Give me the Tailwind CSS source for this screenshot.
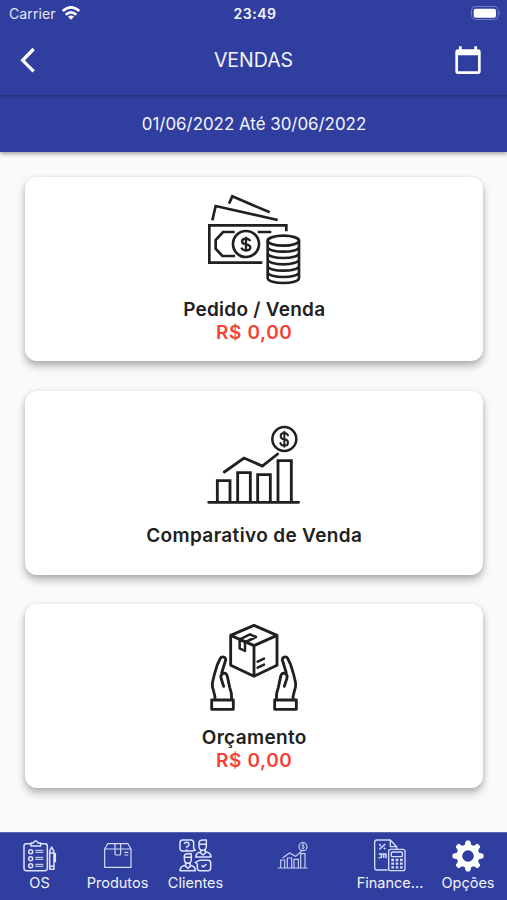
<!DOCTYPE html>
<html lang="pt-BR">
<head>
<meta charset="utf-8">
<title>Vendas</title>
<script src="https://cdn.jsdelivr.net/npm/@tailwindcss/browser@4"></script>
</head>
<body class="bg-[#fafafa]">
<div class="w-[507px] h-[900px] flex flex-col overflow-hidden font-['Inter','Liberation_Sans',sans-serif] text-[#212121]">

  <header class="relative z-10 bg-[#303f9f] text-white shadow-[0_2px_4px_rgba(0,0,0,0.35)]">
    <div class="h-[95px] shadow-[0_1px_3px_rgba(0,0,0,0.35)]">
      <div class="h-7 grid grid-cols-3 items-center pl-[9px] pr-[6px] text-[#e6e8f6]">
        <div class="flex items-center gap-[6px]">
          <span class="text-[14px] leading-5 tracking-[0.1px]">Carrier</span>
          <svg class="w-[18px] h-[14px] mt-[-2px]" viewBox="0 0 54 42" fill="none" stroke="#fff" stroke-width="8">
            <path d="M2 15Q27-7 52 15"/><path d="M11 26Q27 12 43 26"/><path d="M27 41l-9-9q9-7 18 0z" fill="#fff" stroke="none"/>
          </svg>
        </div>
        <div class="text-center text-[14px] font-semibold tracking-[0.5px] leading-5 text-[#f4f5fc]">23:49</div>
        <svg class="w-[30px] h-[14px] justify-self-end mt-[-2px]" viewBox="0 0 90 42">
          <rect x="1.500" y="1.500" width="80" height="39" rx="12" fill="none" stroke="#737dbe" stroke-width="3"/>
          <rect x="8" y="8" width="67" height="27" rx="6" fill="#fff"/>
          <path d="M85 14q5 7 0 14z" fill="#828bc5"/>
        </svg>
      </div>
      <div class="h-[64px] grid grid-cols-[60px_1fr_60px] items-center">
        <svg class="w-[18px] h-[26px] ml-[19px] mt-[-1px]" viewBox="0 0 54 78" fill="none" stroke="#fff" stroke-width="10"><path d="M44 6L11 40l33 33"/></svg>
        <h1 class="text-center text-[19.500px] leading-6 text-[#f2f3fb]">VENDAS</h1>
        <svg class="w-[26px] h-[28px] ml-[7.500px] mt-[-1px]" viewBox="0 0 78 84" fill="#fff"><path fill-rule="evenodd" d="M12 1h8v9h38V1h8v9h3q8 0 8 8v58q0 8-8 8H9q-8 0-8-8V18q0-8 8-8h3zM9 28v48h60V28z"/></svg>
      </div>
    </div>
    <div class="h-[57px] pl-px flex items-center justify-center text-[16.900px] leading-5 text-[#f4f5fc]">01/06/2022 Até 30/06/2022</div>
  </header>

  <main class="flex-1 flex flex-col gap-[29.500px] pl-[25px] pr-[24.500px] pt-[25px] font-semibold text-[19px] leading-[23px] text-center tracking-[0.35px]">
    <section class="h-[184px] shrink-0 rounded-[12px] bg-white shadow-[0_5px_8px_rgba(0,0,0,0.27),0_1px_5px_rgba(0,0,0,0.1)] flex flex-col items-center pt-2">
      <svg class="w-[120px] h-[110px] ml-[3px]" viewBox="0 0 360 330" fill="none" stroke="#202020" stroke-width="8">
        <path d="M102 56l10-22 112 48M52 106l10-43 186 42M274 139v-18H43v112h159M119 141H84l-22 24v26l20 22h38M188 141h41"/>
        <circle cx="153" cy="177" r="39"/>
        <path d="M166 168q-4-7-13-7-12 0-12 8t12 9 13 9-13 9q-11 0-14-8M153 155v45" stroke-width="7"/>
        <ellipse cx="265" cy="167" rx="47" ry="15"/>
        <path d="M218 167v112c0 20 94 20 94 0V167M218 185c0 20 94 20 94 0M218 204c0 20 94 20 94 0M218 223c0 20 94 20 94 0M218 242c0 20 94 20 94 0M218 261c0 20 94 20 94 0"/>
      </svg>
      <div class="mt-[3px] pl-px tracking-[0.25px]">Pedido / Venda</div>
      <div class="text-[#f44336] pl-px tracking-[0.6px]">R$ 0,00</div>
    </section>

    <section class="h-[184px] shrink-0 rounded-[12px] bg-white shadow-[0_5px_8px_rgba(0,0,0,0.27),0_1px_5px_rgba(0,0,0,0.1)] flex flex-col items-center pt-[24.500px]">
      <svg class="w-[120px] h-[100px] ml-[3px]" viewBox="0 0 360 300" fill="none" stroke="#202020" stroke-width="8.500" stroke-linecap="round">
        <path d="M41 262h270M67 262v-65h38v65M128 262v-89h38v89M188 262v-83h38v83M249 262V137h40v125M88 171l59-42 55 24 46-36"/>
        <circle cx="268" cy="72" r="36" stroke-width="7.500"/>
        <path d="M279 61q-3-7-11-7-11 0-11 9t11 10 11 10-11 9q-10 0-12-8M268 50v45" stroke-width="6"/>
      </svg>
      <div class="mt-[9px] pl-px">Comparativo de Venda</div>
    </section>

    <section class="h-[184px] shrink-0 rounded-[12px] bg-white shadow-[0_5px_8px_rgba(0,0,0,0.27),0_1px_5px_rgba(0,0,0,0.1)] flex flex-col items-center pt-[11px]">
      <svg class="w-[120px] h-[105px] ml-[3px]" viewBox="0 0 360 315" fill="none" stroke="#202020" stroke-width="8.500" stroke-linejoin="round" stroke-linecap="round">
        <path d="M177 31l69 30v90l-69 33-70-33V61zM107 61l70 31 69-31M177 92v92"/>
        <path d="M134 73l31-15 18 8-31 15zM134 73v27l16 8V81M188 140l19-9M188 158l19-9" stroke-width="7.500"/>
        <g id="hand">
          <path d="M50 255h65v28H50zM60 253c2-17-10-31-8-48 3-16 9-38 15-56l9-19c5-8 17-4 16 5l-12 39M86 214l-8-25c-3-16 15-20 19-5l7 33c5 13 7 18 6 34"/>
        </g>
        <use href="#hand" transform="translate(354 0) scale(-1 1)"/>
      </svg>
      <div class="mt-[5.500px] pl-px">Orçamento</div>
      <div class="text-[#f44336] pl-px tracking-[0.6px]">R$ 0,00</div>
    </section>
  </main>

  <nav class="h-[68px] shrink-0 bg-[#303f9f] text-[#f2f3fb] grid grid-cols-[78px_78px_78px_118px_77px_78px] text-[14.500px] leading-5 border-t border-[#5965b2]">
    <div class="flex flex-col items-center pl-[2px] pt-[5.500px]">
      <svg class="w-[34px] h-[34px]" viewBox="0 0 102 102" fill="none" stroke="#dfe4ff" stroke-width="4.500" stroke-linejoin="round">
        <path d="M24 14H10q-7 0-7 7v67q0 7 7 7h56q7 0 7-7V21q0-7-7-7H53M24 21v-9h7q7-14 14 0h8v9zM80 37l6-13 7 13v54H80zM80 42h13M80 82h13M97 42v28"/>
        <path d="M37 34h24M37 40h24M37 55h24M37 61h24M37 76h24M37 82h24" stroke-width="3"/>
        <circle cx="23" cy="38" r="6"/><circle cx="23" cy="59" r="6"/><circle cx="23" cy="80" r="6"/>
      </svg>
      <span class="pr-px">OS</span>
    </div>
    <div class="flex flex-col items-center pl-px pt-[5.500px]">
      <svg class="w-[34px] h-[34px]" viewBox="0 0 102 102" fill="none" stroke="#d5dbfa" stroke-width="3.500" stroke-linejoin="round">
        <path d="M11 30l9-16h61l9 16v55H11zM11 30h79M42 14v30q0 4 4 4h9q4 0 4-4V14M42 30V14M70 40h12M70 48h12"/>
      </svg>
      <span>Produtos</span>
    </div>
    <div class="flex flex-col items-center pl-px pt-[5.500px]">
      <svg class="w-[34px] h-[34px] ml-px" viewBox="0 0 102 102" fill="none" stroke="#dfe4ff" stroke-width="4.500" stroke-linejoin="round">
        <path d="M11 3h24q9 0 9 9v15l5 7-11 2H11q-8 0-8-8V11q0-8 8-8zM16 15q1-5 7-5t7 5-7 9v2M23 31v3"/>
        <path d="M60 22V12q0-9 12-9h10v19q0 12-11 12T60 22zM60 16h22M65 33v6q-14 2-15 15h46q0-13-17-16v-5M63 40l9 8 9-8"/>
        <path d="M16 61v-9q0-8 11-8h10v17q0 12-10 12T16 61zM16 55h21M20 72v7Q3 81 3 95h46q0-14-16-16v-7M18 80l9 8 9-8"/>
        <path d="M62 64h25q8 0 8 8v15q0 8-8 8H63q-8 0-8-8V76l-6-6zM68 79l5 5 9-9"/>
      </svg>
      <span>Clientes</span>
    </div>
    <div class="flex flex-col items-center pt-[5.500px]">
      <svg class="w-[34px] h-[34px]" viewBox="0 0 102 102" fill="none" stroke="#c8cff5" stroke-width="3.500">
        <path d="M5 87h90M14 87V63h12v24M34 87V57h13v30M54 87V61h13v26M74 87V44h13v43M20 57l20-15 19 10 18-16"/>
        <circle cx="81" cy="23" r="12"/><path d="M85 19q-7-5-7 1 7 4 7 6-1 4-8 1M81 14v18" stroke-width="2.500"/>
      </svg>
    </div>
    <div class="flex flex-col items-center pt-[5.500px]">
      <svg class="w-[34px] h-[34px] mr-px" viewBox="0 0 102 102" fill="none" stroke="#d5dbfa" stroke-width="4" stroke-linejoin="round">
        <path d="M44 93H12q-7 0-7-7V10q0-7 7-7h40l19 20v7M52 3v20h19"/>
        <path d="M19 31l18-16M19 15l4 6M33 26l4 5M17 45h22v13M17 56h5M25 45v12M32 45v12" stroke-width="4.500"/>
        <rect x="47" y="31" width="49" height="64" rx="6"/><rect x="55" y="39" width="33" height="14" rx="3"/>
        <path d="M55 63h8M68 63h8M81 63h8M55 74h8M68 74h8M81 74h8M55 85h8M68 85h8M81 85h8" stroke-width="7"/>
      </svg>
      <span class="mr-px">Finance...</span>
    </div>
    <div class="flex flex-col items-center pt-[5.500px]">
      <svg class="w-[34px] h-[34px]" viewBox="-51 -51 102 102">
        <g fill="#fff" stroke="#fff" stroke-width="3" stroke-linejoin="round">
          <path id="tooth" d="M-9-31l4-14H5l4 14zM-9 31l4 14H5l4-14z"/>
          <use href="#tooth" transform="rotate(45)"/><use href="#tooth" transform="rotate(90)"/><use href="#tooth" transform="rotate(135)"/>
        </g>
        <circle r="26" fill="none" stroke="#fff" stroke-width="17"/>
      </svg>
      <span>Opções</span>
    </div>
  </nav>
</div>
</body>
</html>
